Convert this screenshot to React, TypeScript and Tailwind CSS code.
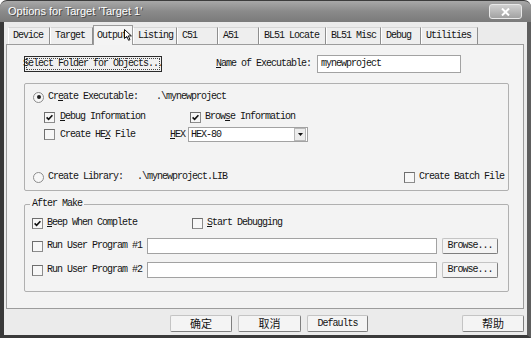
import React from 'react';

const mono = "font-['Liberation_Mono',monospace] text-[10px] tracking-[-1px] text-[#141414] leading-[12px] whitespace-nowrap";
const cjk = "font-['Noto_Sans_CJK_SC',sans-serif] text-[11px] text-[#141414]";

const tabs = [
  { label: 'Device', w: 'w-[42px]' },
  { label: 'Target', w: 'w-[43px]' },
  { label: 'Output', w: 'w-[40px]', active: true },
  { label: 'Listing', w: 'w-[44px]' },
  { label: 'C51', w: 'w-[41px]' },
  { label: 'A51', w: 'w-[41px]' },
  { label: 'BL51 Locate', w: 'w-[67px]' },
  { label: 'BL51 Misc', w: 'w-[55px]' },
  { label: 'Debug', w: 'w-[40px]' },
  { label: 'Utilities', w: 'w-[57px]' },
];

function Check({ checked }: { checked?: boolean }) {
  return (
    <span className="w-[11px] h-[11px] shrink-0 border border-[#8c8c8c] border-t-[#6e6e6e] border-l-[#6e6e6e] bg-[#f7f7f7] flex items-center justify-center">
      {checked && (
        <svg width="7" height="7" viewBox="0 0 7 7">
          <path d="M0.6 3.4 L2.6 5.4 L6.4 1.2" stroke="#111" strokeWidth="1.6" fill="none" />
        </svg>
      )}
    </span>
  );
}

function Radio({ checked }: { checked?: boolean }) {
  return (
    <span className="w-[11px] h-[11px] shrink-0 rounded-full border border-[#8c8c8c] bg-[#f7f7f7] flex items-center justify-center">
      {checked && <span className="w-[4px] h-[4px] rounded-full bg-[#222]" />}
    </span>
  );
}

function Btn({ children, className = '' }: { children: React.ReactNode; className?: string }) {
  return (
    <div
      className={`h-[17px] flex items-center justify-center bg-[#f4f4f4] border border-[#c4c4c4] border-r-[#7e7e7e] border-b-[#7e7e7e] rounded-[2px] ${className}`}
    >
      {children}
    </div>
  );
}

function U({ children }: { children: React.ReactNode }) {
  return <span className="underline underline-offset-[1px]">{children}</span>;
}

export default function App() {
  return (
    <div className="w-[531px] h-[338px] bg-white overflow-hidden flex flex-col">
      {/* Title bar */}
      <div className="h-[22px] shrink-0 flex items-center rounded-t-[7px] border-t border-[#3c3c3c] bg-linear-to-b from-[#a8a8a8] via-[#8a8a8a] to-[#7a7a7a] pl-[8px] pr-[9px]">
        <span className="font-['Liberation_Sans',sans-serif] text-[11px] text-white [text-shadow:1px_1px_0_#4a4a4a]">
          Options for Target 'Target 1'
        </span>
        <div className="ml-auto w-[33px] h-[15px] rounded-[3px] border border-[#e8e8e8] bg-linear-to-b from-[#d0d0d0] to-[#a2a2a2] flex items-center justify-center">
          <svg width="9" height="8" viewBox="0 0 9 8">
            <path d="M1 0.5 L8 7.5 M8 0.5 L1 7.5" stroke="#fff" strokeWidth="2" />
          </svg>
        </div>
      </div>

      {/* Body */}
      <div className="flex-1 flex flex-col bg-[#ebebeb] border-l-[4px] border-r-[4px] border-b-[3px] border-l-[#383838] border-r-[#5e5e5e] border-b-[#3a3a3a] pl-[2px] pr-[3px]">
        {/* Tabs */}
        <div className="mt-[3px] h-[19px] flex items-end pl-[2px] relative z-10">
          {tabs.map((t) =>
            t.active ? (
              <div
                key={t.label}
                className={`${t.w} h-[20px] -mb-px relative bg-[#f4f4f4] border border-b-0 border-[#9a9a9a] flex items-center pl-[3px] ${mono}`}
              >
                {t.label}
                <svg className="absolute left-[30px] top-[3px]" width="8" height="12" viewBox="0 0 8 12">
                  <path d="M0.5 0.5 L0.5 9.5 L2.8 7.4 L4.6 11.3 L6 10.6 L4.3 6.9 L7.4 6.9 Z" fill="#fff" stroke="#111" strokeWidth="1" />
                </svg>
              </div>
            ) : (
              <div
                key={t.label}
                className={`${t.w} h-[17px] bg-[#eeeeee] border-t border-l border-r border-t-[#d6d6d6] border-l-white border-r-[#8e8e8e] flex items-center pl-[4px] ${mono}`}
              >
                {t.label}
              </div>
            )
          )}
        </div>

        {/* Tab panel */}
        <div className="h-[265px] shrink-0 flex flex-col bg-[#f3f3f3] border border-[#9c9c9c] pl-[17px] pr-[14px] pt-[10px]">
          {/* Folder / name row */}
          <div className="h-[18px] flex items-center">
            <div className="w-[138px] h-[16px] border border-[#2a2a2a] bg-[#f0f0f0] p-[1px]">
              <div className={`h-full border border-dotted border-[#444] flex items-center justify-center ${mono} tracking-[-1.2px]`}>
                Select Folder for Objects...
              </div>
            </div>
            <span className={`ml-[54px] ${mono}`}>
              <U>N</U>ame of Executable:
            </span>
            <div className={`ml-[6px] w-[144px] h-[18px] bg-white border border-[#a2a2a2] flex items-center pl-[3px] ${mono}`}>
              mynewproject
            </div>
          </div>

          {/* Output group */}
          <div className="mt-[10px] h-[108px] shrink-0 border border-[#b0b0b0] rounded-[2px] flex flex-col pl-[8px] pr-[4px]">
            <div className="mt-[7px] h-[12px] flex items-center gap-[4px]">
              <Radio checked />
              <span className={mono}>
                Cr<U>e</U>ate Executable:
              </span>
              <span className={`ml-[14px] ${mono}`}>.\mynewproject</span>
            </div>

            <div className="mt-[8px] h-[12px] flex items-center pl-[11px]">
              <div className="w-[146px] flex items-center gap-[5px]">
                <Check checked />
                <span className={mono}>
                  <U>D</U>ebug Information
                </span>
              </div>
              <div className="flex items-center gap-[4px]">
                <Check checked />
                <span className={mono}>
                  Brow<U>s</U>e Information
                </span>
              </div>
            </div>

            <div className="mt-[4px] h-[15px] flex items-center pl-[11px]">
              <div className="w-[126px] flex items-center gap-[5px]">
                <Check />
                <span className={mono}>
                  Create HE<U>X</U> File
                </span>
              </div>
              <span className={`w-[18px] ${mono}`}>
                <U>H</U>EX
              </span>
              <div className="w-[120px] h-[15px] bg-white border border-[#a2a2a2] flex items-center">
                <span className={`pl-[2px] flex-1 ${mono}`}>HEX-80</span>
                <div className="w-[12px] h-[13px] mr-[1px] bg-[#ececec] border border-[#b8b8b8] flex items-center justify-center">
                  <svg width="5" height="3" viewBox="0 0 5 3">
                    <path d="M0 0 L5 0 L2.5 3 Z" fill="#111" />
                  </svg>
                </div>
              </div>
            </div>

            <div className="mt-[29px] h-[12px] flex items-center gap-[4px]">
              <Radio />
              <span className={mono}>Create Library:</span>
              <span className={`ml-[10px] ${mono}`}>.\mynewproject.LIB</span>
              <div className="ml-auto flex items-center gap-[4px]">
                <Check />
                <span className={mono}>Create Batch File</span>
              </div>
            </div>
          </div>

          {/* After Make group */}
          <div className="mt-[13px] h-[88px] shrink-0 border border-[#b0b0b0] rounded-[2px] flex flex-col pl-[7px]">
            <span className={`-mt-[7px] -ml-[2px] px-[2px] self-start bg-[#f3f3f3] ${mono}`}>After Make</span>

            <div className="mt-[7px] h-[12px] flex items-center">
              <div className="w-[160px] flex items-center gap-[4px]">
                <Check checked />
                <span className={mono}>
                  <U>B</U>eep When Complete
                </span>
              </div>
              <div className="flex items-center gap-[4px]">
                <Check />
                <span className={mono}>
                  <U>S</U>tart Debugging
                </span>
              </div>
            </div>

            <div className="mt-[9px] h-[16px] flex items-center">
              <div className="w-[115px] flex items-center gap-[4px]">
                <Check />
                <span className={mono}>Run User Program #1</span>
              </div>
              <div className="w-[290px] h-[16px] bg-white border border-[#a2a2a2]" />
              <Btn className={`ml-[5px] w-[56px] !h-[16px] ${mono}`}>Browse...</Btn>
            </div>

            <div className="mt-[8px] h-[16px] flex items-center">
              <div className="w-[115px] flex items-center gap-[4px]">
                <Check />
                <span className={mono}>Run User Program #2</span>
              </div>
              <div className="w-[290px] h-[16px] bg-white border border-[#a2a2a2]" />
              <Btn className={`ml-[5px] w-[56px] !h-[16px] ${mono}`}>Browse...</Btn>
            </div>
          </div>
        </div>

        {/* Dialog buttons */}
        <div className="mt-[6px] h-[17px] flex items-center pl-[164px]">
          <Btn className={`w-[62px] ${cjk}`}>确定</Btn>
          <Btn className={`ml-[6px] w-[63px] ${cjk}`}>取消</Btn>
          <Btn className={`ml-[6px] w-[61px] ${mono}`}>Defaults</Btn>
          <Btn className={`ml-auto w-[62px] ${cjk}`}>帮助</Btn>
        </div>
      </div>
    </div>
  );
}
